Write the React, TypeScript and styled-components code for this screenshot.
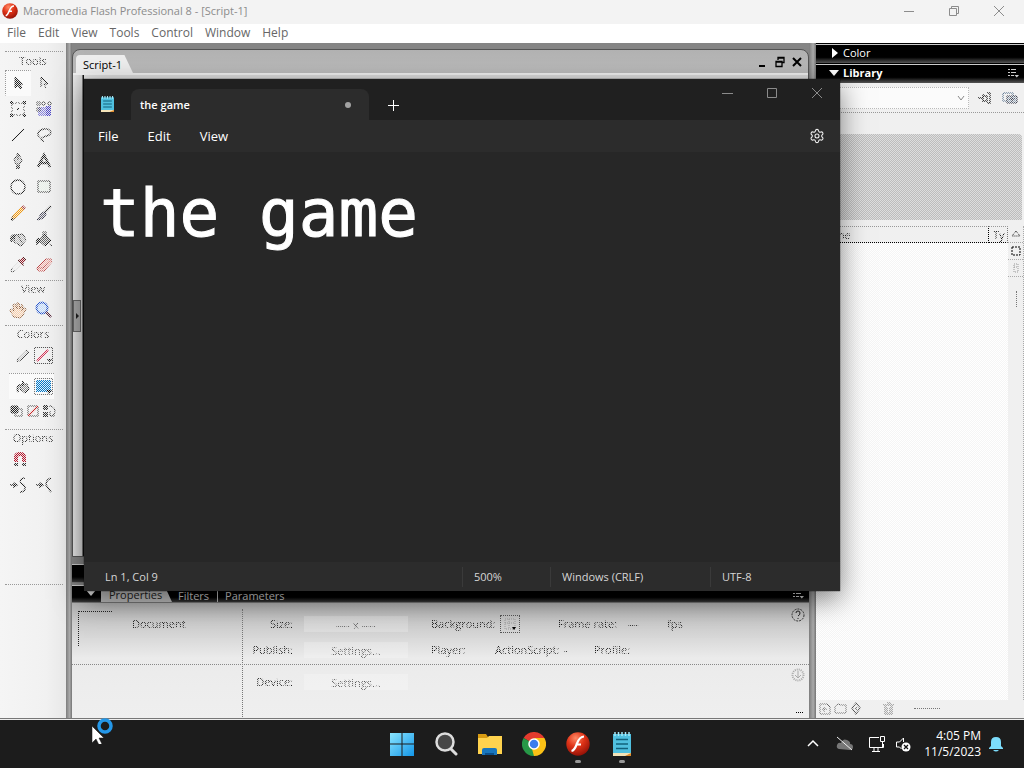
import React from "react";
import styled, { createGlobalStyle, css } from "styled-components";
import { Settings } from "lucide-react";

const GlobalStyle = createGlobalStyle`
  *, *::before, *::after { box-sizing: border-box; }
  html, body { margin: 0; padding: 0; }
  body { font-family: "Open Sans", "Noto Sans", sans-serif; font-size: 12px; background: #1c1c1c; overflow: hidden; }
  button, input, select, textarea { font: inherit; color: inherit; margin: 0; }
  button { border: 0; padding: 0; background: none; display: inline-flex; align-items: center; justify-content: center; }
  svg { display: block; flex: none; }
`;

/* Disabled parts are drawn through a one-pixel checkerboard. */
const dither = css`
  mask-image: repeating-conic-gradient(#000 0 25%, rgba(0, 0, 0, 0.08) 0 50%);
  mask-size: 2px 2px;
`;

const Desktop = styled.div`
  position: relative;
  display: flex;
  flex-direction: column;
  min-height: 100vh;
`;

/* ---------- Flash application frame ---------- */

const TitleBar = styled.header`
  display: flex;
  align-items: center;
  height: 24px;
  padding: 0 17px 2px 2px;
  gap: 5px;
  background: #f3f3f3;
  color: #8c8c8c;
`;
const AppTitle = styled.h1`
  margin: 0;
  flex: 1;
  font-size: 11px;
  line-height: 22px;
  font-weight: 400;
`;
const WindowControls = styled.div`
  display: flex;
  gap: 29px;
`;
const MenuBar = styled.nav`
  display: flex;
  align-items: center;
  height: 19px;
  padding: 0 0 2px 7px;
  gap: 12px;
  background: #fff;
  color: #666;
`;
const MenuItem = styled.button`
  font-size: 12px;
  line-height: 17px;
`;

const Workspace = styled.main`
  flex: 1;
  display: grid;
  grid-template-columns: 66px 6px minmax(0, 1fr) 7px 208px;
  background: #858585;
  border-bottom: 1px solid #777;
`;
const Splitter = styled.div`
  background: linear-gradient(90deg, #7d7d7d, #aaa 60%, #747474);
`;

/* ---------- Tools ---------- */

const Tools = styled.aside`
  background: linear-gradient(90deg, #f5f5f5, #f1f1f1 70%, #e8e8e8);
  padding: 8px 3px 0 5px;
`;
const ToolSection = styled.section<{ $last?: boolean }>`
  border-top: 1px dotted #999;
  padding-bottom: ${(p) => (p.$last ? 86 : 1)}px;
  border-bottom: ${(p) => (p.$last ? "1px dotted #999" : "0")};
  margin-bottom: 1px;
`;
const ToolHeading = styled.h2<{ $first?: boolean }>`
  margin: 0;
  padding: 0 2px 0 0;
  text-align: center;
  font-size: 11px;
  font-weight: 400;
  line-height: ${(p) => (p.$first ? 18 : 16)}px;
  color: #222;
  ${dither}
`;
const ToolGrid = styled.div`
  display: grid;
  grid-template-columns: 26px 26px;
`;
const ToolButton = styled.button<{ $active?: boolean }>`
  height: 26px;
  border: 1px dotted transparent;
  ${(p) => p.$active && css`border-color: #999 transparent transparent #999; background: #fafafa;`}
  & svg { ${dither} }
`;
const SwatchRow = styled.div<{ $active?: boolean }>`
  display: flex;
  align-items: center;
  justify-content: flex-end;
  gap: 4px;
  margin: 0 9px 5px 4px;
  height: 26px;
  border-top: 1px dotted ${(p) => (p.$active ? "#999" : "transparent")};
  background: ${(p) => (p.$active ? "#fafafa" : "transparent")};
  & svg { ${dither} }
`;
const SwatchOptions = styled.div`
  display: flex;
  gap: 2px;
  padding: 0 0 9px 5px;
  & svg { ${dither} }
`;

/* ---------- Centre: script document and properties ---------- */

const Centre = styled.div`
  display: flex;
  flex-direction: column;
  gap: 7px;
  padding-top: 6px;
`;
const ScriptWindow = styled.section`
  flex: 1;
  display: flex;
  flex-direction: column;
  border: 1px solid #555;
  border-radius: 8px 8px 0 0;
  background: linear-gradient(180deg, #b2b2b2, #bcbcbc 23px, #dcdcdc 24px, #d8d8d8);
`;
const ScriptTabs = styled.div`
  display: flex;
  align-items: flex-end;
  justify-content: space-between;
  height: 23px;
  padding: 0 4px 0 3px;
`;
const ScriptTab = styled.button`
  height: 18px;
  width: 57px;
  justify-content: flex-start;
  padding-left: 7px;
  background: #eee;
  border-radius: 4px 0 0 0;
  clip-path: polygon(0 0, 85% 0, 100% 100%, 0 100%);
  font-size: 11px;
  color: #000;
`;
const ScriptControls = styled.div`
  display: flex;
  gap: 3px;
  padding-bottom: 4px;
`;
const ScriptBody = styled.div`
  flex: 1;
  display: flex;
  align-items: center;
  background: linear-gradient(90deg, #e6e6e6, #d6d6d6 9px, #111 10px, #111 11px, #ddd 11px);
  border-top: 2px solid #f1f1f1;
`;
const Collapser = styled.button`
  width: 8px;
  height: 32px;
  border: 1px solid #666;
  background: #aaa;
`;
const PanelStack = styled.div`
  display: flex;
  flex-direction: column;
  gap: 2px;
`;
const PanelBar = styled.div<{ $height: number }>`
  display: flex;
  align-items: flex-end;
  height: ${(p) => p.$height}px;
  padding: 0 5px 0 14px;
  border-top: 1px solid #ccc;
  border-bottom: 1px solid #777;
  background: linear-gradient(180deg, #000 70%, #3c3c3c);
  color: #ccc;
`;
const PropertiesTab = styled.button`
  width: 71px;
  height: 14px;
  margin-left: 5px;
  padding-left: 8px;
  justify-content: flex-start;
  background: #bfbfbf;
  color: #222;
  font-size: 11px;
  line-height: 14px;
  clip-path: polygon(0 0, 91% 0, 100% 100%, 0 100%);
`;
const PanelTab = styled.button`
  margin-left: 6px;
  padding-right: 8px;
  font-size: 11px;
  line-height: 13px;
  & + & { border-left: 1px solid #bbb; margin-left: 0; padding-left: 7px; }
`;
const BarMenu = styled.button`
  margin-left: auto;
  align-self: center;
`;
const PropertiesPanel = styled.section`
  display: grid;
  grid-template-columns: 171px minmax(0, 1fr) 22px;
  height: 115px;
  background: linear-gradient(180deg, #b2b2b2, #cbcbcb 20px, #ebebeb 55px, #efefef);
  color: #111;
`;
const DocumentCell = styled.div`
  display: flex;
  align-items: flex-start;
  gap: 20px;
  margin-top: 6px;
  border-right: 1px dotted #777;
  padding: 2px 0 0 6px;
  height: 108px;
`;
const PreviewBox = styled.div`
  width: 34px;
  height: 35px;
  border-top: 1px dotted #222;
  border-left: 1px dotted #222;
`;
const Label = styled.span<{ $width?: number }>`
  width: ${(p) => (p.$width ? `${p.$width}px` : "auto")};
  font-size: 11px;
  line-height: 16px;
  white-space: nowrap;
  ${dither}
`;
const DocumentType = styled(Label)`
  padding-top: 5px;
`;
const Fields = styled.div`
  display: flex;
  flex-direction: column;
`;
const FieldBlock = styled.div<{ $first?: boolean }>`
  display: flex;
  flex-direction: column;
  gap: 6px;
  height: ${(p) => (p.$first ? 62 : 51)}px;
  padding: ${(p) => (p.$first ? "11px 0 0 179px" : "7px 0 0 8px")};
  margin: ${(p) => (p.$first ? "0 -22px 0 -171px" : "0")};
  border-bottom: ${(p) => (p.$first ? "1px dotted #888" : "0")};
`;
const FieldRow = styled.div`
  display: flex;
  align-items: center;
  height: 20px;
`;
const FieldName = styled.label<{ $width: number; $right?: boolean }>`
  width: ${(p) => p.$width}px;
  text-align: ${(p) => (p.$right ? "right" : "left")};
  font-size: 11px;
  line-height: 16px;
  white-space: nowrap;
  ${dither}
`;
const FieldButton = styled.button`
  width: 104px;
  height: 16px;
  margin: 0 23px 0 11px;
  background: rgba(255, 255, 255, 0.22);
  color: #555;
  font-size: 11px;
  & span { ${dither} }
`;
const ColorWell = styled.button`
  width: 20px;
  height: 18px;
  margin-right: 38px;
  border: 1px dotted #555;
`;
const PanelActions = styled.div`
  display: flex;
  flex-direction: column;
  align-items: center;
  padding: 5px 0 2px;
`;
const ActionSlot = styled.button`
  height: 14px;
  & + & { margin-top: 46px; }
  & + & + & { margin-top: 22px; }
`;

/* ---------- Library ---------- */

const Library = styled.aside`
  display: flex;
  flex-direction: column;
  background: #f0f0f0;
  min-width: 0;
`;
const LibraryHeader = styled.button<{ $open?: boolean }>`
  display: flex;
  justify-content: flex-start;
  gap: 4px;
  height: 20px;
  padding: 0 5px 2px 13px;
  border-top: 1px solid #000;
  box-shadow: inset 0 1px #ccc;
  background: linear-gradient(180deg, #000 70%, #555);
  color: #fff;
  font-size: 11px;
  font-weight: ${(p) => (p.$open ? 700 : 400)};
  & > :nth-child(3) { margin-left: auto; }
`;
const LibraryPicker = styled.div`
  display: flex;
  align-items: center;
  gap: 7px;
  height: 30px;
  padding: 0 5px 0 8px;
  border-bottom: 1px dotted #999;
`;
const SelectFrame = styled.div`
  flex: 1;
  display: grid;
  align-items: center;
  justify-items: end;
  & > * { grid-area: 1 / 1; }
  & > svg { margin-right: 4px; pointer-events: none; }
`;
const DocumentSelect = styled.select`
  appearance: none;
  width: 100%;
  height: 22px;
  border: 1px dotted #bbb;
  border-radius: 0;
  background: #fbfbfb;
`;
const LibraryTool = styled.button`
  width: 18px;
  & svg { ${dither} }
`;
const PreviewArea = styled.div`
  height: 86px;
  margin: 21px 2px 6px 0;
  border-radius: 0 4px 0 0;
  background: repeating-conic-gradient(#bdbdbd 0 25%, #dedede 0 50%) 0 0 / 2px 2px;
`;
const LibraryList = styled.div`
  flex: 1;
  display: grid;
  grid-template-columns: minmax(0, 1fr) 16px;
`;
const ListSurface = styled.div`
  background: repeating-conic-gradient(#f5f5f5 0 25%, #fff 0 50%) 0 0 / 2px 2px;
`;
const LibraryTable = styled.table`
  width: 100%;
  table-layout: fixed;
  border-collapse: separate;
  border-spacing: 0;
  background: #f0f0f0;
`;
const HeadCell = styled.th<{ $width?: number }>`
  width: ${(p) => (p.$width ? `${p.$width}px` : "auto")};
  height: 17px;
  padding: 0 0 0 4px;
  border-top: 1px dotted #999;
  border-bottom: 1px dotted #000;
  border-right: 1px dotted ${(p) => (p.$width ? "#777" : "#000")};
  text-align: left;
  font-size: 11px;
  line-height: 15px;
  font-weight: 400;
  white-space: nowrap;
  & span { ${dither} }
`;
const ListButtons = styled.div`
  display: flex;
  flex-direction: column;
  border-right: 1px dotted #aaa;
`;
const ListButton = styled.button`
  height: 17px;
  border-bottom: 1px dotted #aaa;
`;
const ScrollMark = styled.span`
  height: 16px;
  margin: 14px 6px 0 8px;
  border-left: 1px dotted #777;
`;
const LibraryFooter = styled.footer`
  display: flex;
  align-items: center;
  gap: 19px;
  height: 18px;
  padding: 0 0 2px 2px;
  & svg { ${dither} }
`;
const FooterGroup = styled.div`
  display: flex;
  gap: 3px;
`;
const FooterRule = styled.span`
  width: 26px;
  border-top: 1px dotted #777;
`;

/* ---------- Notepad ---------- */

const Notepad = styled.section`
  position: absolute;
  left: 84px;
  top: 79px;
  right: 184px;
  bottom: 177px;
  display: flex;
  flex-direction: column;
  background: #272727;
  color: #fff;
  box-shadow: 0 0 1px #000, 0 8px 26px rgba(0, 0, 0, 0.5);
`;
const NoteTitle = styled.header`
  display: flex;
  align-items: flex-end;
  height: 41px;
  padding: 0 17px;
  background: #202020;
`;
const NoteLogo = styled.span`
  align-self: center;
  margin-top: 8px;
`;
const NoteTab = styled.div`
  display: flex;
  align-items: center;
  justify-content: space-between;
  width: 238px;
  height: 31px;
  margin: 0 16px 0 17px;
  padding: 0 18px 0 9px;
  border-radius: 8px 8px 0 0;
  background: #2c2c2c;
  font-size: 11px;
  font-weight: 600;
`;
const UnsavedDot = styled.i`
  width: 6px;
  height: 6px;
  border-radius: 50%;
  background: #a2a2a2;
`;
const NewTab = styled.button`
  width: 16px;
  height: 31px;
`;
const NoteControls = styled.div`
  display: flex;
  gap: 33px;
  margin-left: auto;
  align-self: flex-start;
  padding-top: 8px;
  color: #8b8b8b;
`;
const NoteMenu = styled.nav`
  display: flex;
  align-items: center;
  height: 32px;
  padding: 0 15px 0 14px;
  gap: 29px;
  background: #2c2c2c;
  font-size: 13px;
  & > :last-child { margin-left: auto; }
`;
const Editor = styled.textarea`
  flex: 1;
  width: 100%;
  padding: 22px 16px;
  border: 0;
  outline: 0;
  resize: none;
  background: transparent;
  font-family: "DejaVu Sans Mono", monospace;
  font-size: 66px;
  line-height: 80px;
  -webkit-text-stroke: 1px #fff;
`;
const StatusBar = styled.footer`
  display: grid;
  grid-template-columns: minmax(0, 1fr) 88px 160px 130px;
  align-items: center;
  height: 29px;
  background: #2c2c2c;
  color: #d6d6d6;
  font-size: 11px;
`;
const StatusItem = styled.span<{ $first?: boolean }>`
  line-height: 20px;
  padding-left: ${(p) => (p.$first ? 21 : 11)}px;
  border-left: ${(p) => (p.$first ? "0" : "1px solid #3a3a3a")};
`;

/* ---------- Taskbar ---------- */

const Taskbar = styled.footer`
  display: grid;
  grid-template-columns: 1fr auto 1fr;
  align-items: center;
  height: 49px;
  border-top: 1px solid #eee;
  background: #1c1c1c;
  color: #fff;
`;
const Pinned = styled.nav`
  grid-column: 2;
  display: flex;
  gap: 20px;
`;
const PinnedApp = styled.button<{ $running?: boolean }>`
  width: 24px;
  height: 48px;
  position: relative;
  &::after {
    content: "";
    display: ${(p) => (p.$running ? "block" : "none")};
    position: absolute;
    bottom: 5px;
    left: 9px;
    width: 6px;
    height: 3px;
    border-radius: 2px;
    background: #999;
  }
`;
const Tray = styled.div`
  display: flex;
  align-items: center;
  justify-content: flex-end;
  padding-right: 21px;
`;
const TrayButton = styled.button<{ $width: number }>`
  width: ${(p) => p.$width}px;
  height: 32px;
`;
const Clock = styled.time`
  text-align: right;
  font-size: 12px;
  line-height: 16px;
  margin: 0 8px 0 11px;
  white-space: nowrap;
`;
const Pointer = styled.div`
  position: absolute;
  left: 91px;
  bottom: 24px;
  pointer-events: none;
`;

/* ---------- Drawings ---------- */

type IconProps = { size?: number; w?: number; h?: number; children: React.ReactNode };
const Icon = ({ size = 18, w = size, h = size, children }: IconProps) => (
  <svg width={w} height={h} viewBox={`0 0 ${w} ${h}`} fill="none" stroke="currentColor" aria-hidden="true">
    {children}
  </svg>
);

const FlashLogo = ({ size }: { size: number }) => (
  <svg width={size} height={size} viewBox="0 0 24 24" aria-hidden="true">
    <defs>
      <radialGradient id={`flash${size}`} cx="40%" cy="25%" r="80%">
        <stop offset="0" stopColor="#ff8a66" />
        <stop offset=".45" stopColor="#e03418" />
        <stop offset="1" stopColor="#8e0e05" />
      </radialGradient>
    </defs>
    <circle cx="12" cy="12" r="11.7" fill={`url(#flash${size})`} />
    <path d="M18 4.500c-4 0-5.500 3-7 7s-2.500 7-5.500 7.500M9.500 12.500h5.500" fill="none" stroke="#fff" strokeWidth="2.200" />
  </svg>
);

const NotepadLogo = ({ w, h }: { w: number; h: number }) => (
  <svg width={w} height={h} viewBox="0 0 18 24" preserveAspectRatio="none" aria-hidden="true">
    <path d="M0 2h18v20H0z" fill="#50c0df" />
    <path d="M0 21h18v3H0z" fill="#f3e3b8" />
    <path d="M12 24l6-3v3z" fill="#e08b2c" />
    <path d="M2 0v4M5.500 0v4M9 0v4M12.500 0v4M16 0v4" stroke="#a5e7f7" strokeWidth="1.500" />
    <path d="M3 7.500h12M3 12h12M3 16.500h12" stroke="#11617c" strokeWidth="1.600" />
  </svg>
);

const PanelMenuIcon = () => (
  <Icon w={12} h={10}>
    <path d="M1 1.500h2M4 1.500h5M1 4.500h2M4 4.500h5M1 7.500h2M4 7.500h3" stroke="#ccc" />
    <path d="M7.500 7h4.500l-2.200 2.500z" fill="#ccc" stroke="none" />
  </Icon>
);

const toolIcons: { name: string; art: React.ReactNode }[] = [
  { name: "Selection", art: <path d="M6 3v11l3-3 2 4 2-1-2-4h3z" fill="#222" stroke="#222" /> },
  { name: "Subselection", art: <path d="M6 3v10l3-3 2 4M6 3l7 7H9" stroke="#222" fill="#ddd" /> },
  {
    name: "Free Transform",
    art: <><path d="M3 3h12v12H3z" stroke="#222" strokeDasharray="2 1" /><path d="M1 1h3v3H1zM14 1h3v3h-3zM1 14h3v3H1zM14 14h3v3h-3zM8 8h2v2H8z" fill="#222" stroke="none" /></>,
  },
  {
    name: "Gradient Transform",
    art: <><path d="M3 7h12v9H3z" fill="#8a86dc" stroke="none" /><path d="M11 6h5v10h-5z" fill="#4f48c8" stroke="none" /><path d="M2 2h3v3H2zM7 2h3v3H7zM13 2h3v3h-3zM2 8h3v3H2z" stroke="#333" /></>,
  },
  { name: "Line", art: <path d="M3 15L15 3" stroke="#222" strokeWidth="1.500" /> },
  { name: "Lasso", art: <path d="M5 11c-4-2-2-7 4-8s9 4 5 6-8 2-8 4 3 0 2 3" stroke="#333" strokeWidth="1.400" /> },
  { name: "Pen", art: <><path d="M9 1l4 7-2 4H7L5 8z" stroke="#222" fill="#bbb" /><path d="M7 13h4v4H7z" fill="#444" stroke="none" /><path d="M9 2v6" stroke="#222" /></> },
  { name: "Type", art: <path d="M3 15L9 3l6 12M5.500 11h7" stroke="#222" strokeWidth="2.600" /> },
  { name: "Oval", art: <circle cx="9" cy="9" r="7" stroke="#222" strokeWidth="1.400" fill="#f6f6f6" /> },
  { name: "Rectangle", art: <path d="M3 3h12v11H3z" stroke="#222" fill="#e9f2ea" /> },
  { name: "Pencil", art: <><path d="M2 16l2-5 9-9 3 3-9 9z" fill="#f59a0c" stroke="#8a632a" /><path d="M12 3l2-2 3 3-2 2z" fill="#a44" stroke="none" /><path d="M2 16l2-1" stroke="#000" strokeWidth="2" /></> },
  { name: "Brush", art: <><path d="M16 2l-7 7" stroke="#333" strokeWidth="2" /><path d="M9 8l2 2c-1 4-4 5-9 6 3-3 3-7 7-8z" fill="#667" stroke="#334" /></> },
  { name: "Ink Bottle", art: <><path d="M6 5l8-1 3 6-5 6-7-4z" fill="#bbb" stroke="#222" /><path d="M6 5c-4-1-5 3-4 7l3-4z" fill="#333" stroke="#222" /><path d="M9 5l4 8" stroke="#333" /></> },
  { name: "Paint Bucket", art: <><path d="M9 4l7 6-6 6-7-6z" fill="#666" stroke="#111" /><path d="M8 8V2h3v5" stroke="#222" /><path d="M4 8c-3 0-3 4-2 7l3-4zM14 14l3 2" fill="#222" stroke="#222" /></> },
  { name: "Eyedropper", art: <><path d="M2 16l1-4 7-7 3 3-7 7z" fill="#eee" stroke="#444" /><path d="M9 4l2 0 3-3 3 3-3 3v3z" fill="#951c28" stroke="#522" /></> },
  { name: "Eraser", art: <><path d="M2 12l9-9h5l1 3-8 9H3z" fill="#f4b2aa" stroke="#b44" /><path d="M2 12h6l8-9" stroke="#b44" /></> },
];

const Close = ({ size = 12 }: { size?: number }) => (
  <Icon size={size}><path d={`M1 1L${size - 1} ${size - 1}M${size - 1} 1L1 ${size - 1}`} /></Icon>
);

export default function App() {
  return (
    <Desktop>
      <GlobalStyle />
      <TitleBar>
        <FlashLogo size={16} />
        <AppTitle>Macromedia Flash Professional 8 - [Script-1]</AppTitle>
        <WindowControls>
          <button aria-label="Minimize"><Icon w={16} h={12}><path d="M3 6.500h10" /></Icon></button>
          <button aria-label="Restore"><Icon w={16} h={12}><path d="M3.500 3.500h7v7h-7zM5.500 3.500V1.500h7v7h-2" strokeLinejoin="round" /></Icon></button>
          <button aria-label="Close"><Icon w={16} h={12}><path d="M3 1l10 10M13 1L3 11" /></Icon></button>
        </WindowControls>
      </TitleBar>
      <MenuBar>
        {["File", "Edit", "View", "Tools", "Control", "Window", "Help"].map((m) => <MenuItem key={m}>{m}</MenuItem>)}
      </MenuBar>

      <Workspace>
        <Tools>
          <ToolSection>
            <ToolHeading $first>Tools</ToolHeading>
            <ToolGrid>
              {toolIcons.map((t, i) => (
                <ToolButton key={t.name} aria-label={t.name} $active={i === 0}><Icon>{t.art}</Icon></ToolButton>
              ))}
            </ToolGrid>
          </ToolSection>
          <ToolSection>
            <ToolHeading>View</ToolHeading>
            <ToolGrid>
              <ToolButton aria-label="Hand">
                <Icon><path d="M5 16l-4-6 1-2 3 2-1-6 2-1 2 5 0-6h2l1 6 2-5 1 1-1 6 2-3 2 1-3 6-2 3z" fill="#f9cda8" stroke="#8a5630" /></Icon>
              </ToolButton>
              <ToolButton aria-label="Zoom">
                <Icon><circle cx="7" cy="7" r="5.500" fill="#c0dcff" stroke="#2456d0" strokeWidth="2" /><path d="M11 11l5 5" stroke="#5b2c40" strokeWidth="3" /></Icon>
              </ToolButton>
            </ToolGrid>
          </ToolSection>
          <ToolSection>
            <ToolHeading>Colors</ToolHeading>
            <SwatchRow>
              <Icon size={14}><path d="M1 13l1-4 8-8 3 2-8 8z" stroke="#444" fill="#ccc" /></Icon>
              <Icon w={20} h={18}><path d="M.5.5h18v16H.5z" stroke="#555" /><path d="M3 14L14 3" stroke="#d0143c" strokeWidth="2" /><path d="M13 12h5l-2.500 3z" fill="#000" stroke="none" /></Icon>
            </SwatchRow>
            <SwatchRow $active>
              <Icon size={14}><path d="M5 4l6 0 2 5-4 4-5-4z" fill="#888" stroke="#222" /><path d="M7 1v5M4 5C1 6 1 8 2 12" stroke="#222" strokeWidth="2" /></Icon>
              <Icon w={20} h={18}><path d="M2 2h15v12H2z" fill="#0078c8" stroke="none" /><path d="M.5.5h18v16H.5z" stroke="#777" /><path d="M12 12h6l-3 4z" fill="#000" stroke="none" /></Icon>
            </SwatchRow>
            <SwatchOptions>
              <Icon size={14}><path d="M5 5h7v7H5z" fill="#eee" stroke="#333" /><path d="M1 2h7v7H1z" fill="#222" stroke="#222" /></Icon>
              <Icon size={14}><path d="M2 2h10v10H2z" stroke="#333" /><path d="M2 12L12 2" stroke="#c22" strokeWidth="2" /></Icon>
              <Icon size={14}><path d="M1 1h5v5H1zM1 8h5v5H1z" fill="#333" stroke="none" /><path d="M7 2h2q4 1 4 5t-5 5M8 7v5h5" stroke="#333" /></Icon>
            </SwatchOptions>
          </ToolSection>
          <ToolSection $last>
            <ToolHeading>Options</ToolHeading>
            <ToolGrid>
              <ToolButton aria-label="Snap to Objects"><Icon><path d="M7 12V7q0-3 4-3t4 3v5" stroke="#b5142a" strokeWidth="4" /><path d="M5 14.500h4M13 14.500h4" stroke="#333" strokeWidth="3" /></Icon></ToolButton>
              <span />
              <ToolButton aria-label="Smooth"><Icon><path d="M1 9h7M5 7l3 2-3 2zM16 2c-4 0-6 3-4 5s5 3 4 6-3 3-5 3" stroke="#222" strokeWidth="1.400" /></Icon></ToolButton>
              <ToolButton aria-label="Straighten"><Icon><path d="M1 9h7M5 7l3 2-3 2zM16 2c-3 1-5 4-5 7l5 7" stroke="#222" strokeWidth="1.400" /></Icon></ToolButton>
            </ToolGrid>
          </ToolSection>
        </Tools>

        <Splitter />

        <Centre>
          <ScriptWindow>
            <ScriptTabs>
              <ScriptTab>Script-1</ScriptTab>
              <ScriptControls>
                <button aria-label="Minimize script"><Icon size={14}><path d="M3 11h6" stroke="#000" strokeWidth="2" /></Icon></button>
                <button aria-label="Restore script"><Icon size={14}><path d="M3 6.500h6v5H3zM3 7h6M5 5V2.500h6v5H9M5 3h6" stroke="#000" strokeWidth="1.300" /></Icon></button>
                <button aria-label="Close script"><Icon size={14}><path d="M3 3l8 8M11 3l-8 8" stroke="#000" strokeWidth="2" /></Icon></button>
              </ScriptControls>
            </ScriptTabs>
            <ScriptBody>
              <Collapser aria-label="Expand side pane"><Icon w={5} h={8}><path d="M1 1v6l3-3z" fill="#222" stroke="none" /></Icon></Collapser>
            </ScriptBody>
          </ScriptWindow>
          <PanelStack>
            <PanelBar $height={19} />
            <div>
              <PanelBar $height={18}>
                <Icon w={10} h={14}><path d="M0 2h10L5 8z" fill="#ddd" stroke="none" /></Icon>
                <PropertiesTab>Properties</PropertiesTab>
                <PanelTab>Filters</PanelTab>
                <PanelTab>Parameters</PanelTab>
                <BarMenu aria-label="Panel options"><PanelMenuIcon /></BarMenu>
              </PanelBar>
              <PropertiesPanel>
                <DocumentCell>
                  <PreviewBox />
                  <DocumentType>Document</DocumentType>
                </DocumentCell>
                <Fields>
                  <FieldBlock $first>
                    <FieldRow>
                      <FieldName htmlFor="size" $width={42} $right>Size:</FieldName>
                      <FieldButton id="size"><span>---- x ----</span></FieldButton>
                      <FieldName htmlFor="background" $width={69}>Background:</FieldName>
                      <ColorWell id="background"><Icon size={14}><path d="M2 2h10v10H2zM6 2v10M2 6h10" stroke="#999" strokeDasharray="1 1" /><path d="M9 10h4l-2 3z" fill="#000" stroke="none" /></Icon></ColorWell>
                      <Label $width={70}>Frame rate:</Label>
                      <Label $width={39}>---</Label>
                      <Label>fps</Label>
                    </FieldRow>
                    <FieldRow>
                      <FieldName htmlFor="publish" $width={42} $right>Publish:</FieldName>
                      <FieldButton id="publish"><span>Settings...</span></FieldButton>
                      <Label $width={64}>Player:</Label>
                      <Label $width={69}>ActionScript:</Label>
                      <Label $width={30}>-</Label>
                      <Label>Profile:</Label>
                    </FieldRow>
                  </FieldBlock>
                  <FieldBlock>
                    <FieldRow>
                      <FieldName htmlFor="device" $width={42} $right>Device:</FieldName>
                      <FieldButton id="device"><span>Settings...</span></FieldButton>
                    </FieldRow>
                  </FieldBlock>
                </Fields>
                <PanelActions>
                  <ActionSlot aria-label="Help"><Icon size={14}><circle cx="7" cy="7" r="6" stroke="#333" strokeDasharray="2 1" /><path d="M5 5q0-2 2-2t2 2-2 3M7 10v1" stroke="#222" /></Icon></ActionSlot>
                  <ActionSlot aria-label="Edit action"><Icon size={14}><circle cx="7" cy="7" r="5.500" stroke="#aaa" strokeWidth="2" strokeDasharray="1 1" /><path d="M7 3v7M4 7l3 3 3-3" stroke="#aaa" /></Icon></ActionSlot>
                  <ActionSlot aria-label="Expand"><Icon w={12} h={14}><path d="M4 8.500h8" stroke="#000" strokeDasharray="1 1" /></Icon></ActionSlot>
                </PanelActions>
              </PropertiesPanel>
            </div>
          </PanelStack>
        </Centre>

        <Splitter />

        <Library>
          <LibraryHeader><Icon w={10} h={10}><path d="M3 0v10l6-5z" fill="#fff" stroke="none" /></Icon><span>Color</span></LibraryHeader>
          <LibraryHeader $open>
            <Icon w={10} h={10}><path d="M0 2h10L5 8z" fill="#fff" stroke="none" /></Icon>
            <span>Library</span>
            <PanelMenuIcon />
          </LibraryHeader>
          <LibraryPicker>
            <SelectFrame>
              <DocumentSelect aria-label="Library document" />
              <Icon w={8} h={6}><path d="M1 1l3 4 3-4" stroke="#888" /></Icon>
            </SelectFrame>
            <LibraryTool aria-label="Pin library"><Icon w={16} h={14}><path d="M1 7h5M6 3v8M6 5h4v5H6M10 2h3v10h-3" stroke="#222" strokeWidth="1.400" /></Icon></LibraryTool>
            <LibraryTool aria-label="New library panel"><Icon w={16} h={14}><path d="M1 2h10v8H1z" stroke="#357" /><path d="M5 5h10v7H5z" fill="#9ab" stroke="#223" /><path d="M7 8h6M10 6v5" stroke="#223" /></Icon></LibraryTool>
          </LibraryPicker>
          <PreviewArea />
          <LibraryList>
            <ListSurface>
              <LibraryTable>
                <thead><tr><HeadCell><span>Name</span></HeadCell><HeadCell $width={19}><span>Ty</span></HeadCell></tr></thead>
              </LibraryTable>
            </ListSurface>
            <ListButtons>
              <ListButton aria-label="Sort order"><Icon w={10} h={8}><path d="M5 1L1 6h8z" stroke="#222" strokeDasharray="1 1" /></Icon></ListButton>
              <ListButton aria-label="Wide view"><Icon size={10}><path d="M1 1h8v8H1z" stroke="#000" strokeDasharray="2 1" /></Icon></ListButton>
              <ListButton aria-label="Narrow view"><Icon size={10}><path d="M3 1h4v8H3zM3 4h4" stroke="#999" strokeDasharray="1 1" /></Icon></ListButton>
              <ScrollMark />
            </ListButtons>
          </LibraryList>
          <LibraryFooter>
            <FooterGroup>
              <Icon size={13}><path d="M2 2h7l3 3v7H2zM4 7h5M6 5v5" stroke="#666" /></Icon>
              <Icon size={13}><path d="M1 4l3-2 3 1h5v8H1z" stroke="#666" /></Icon>
              <Icon size={13}><path d="M6 1l4 5-4 6-4-6zM6 5v3" stroke="#555" strokeWidth="1.400" /></Icon>
            </FooterGroup>
            <Icon size={13}><path d="M1 3h11M3 4v8h7V4M5 1h4M5 5v6M8 5v6" stroke="#666" /></Icon>
            <FooterRule />
          </LibraryFooter>
        </Library>
      </Workspace>

      <Taskbar>
        <Pinned>
          <PinnedApp aria-label="Start"><Icon size={24}>
            <defs><linearGradient id="win" x1="0" y1="0" x2="1" y2="1"><stop offset="0" stopColor="#8be6ff" /><stop offset="1" stopColor="#1396e8" /></linearGradient></defs>
            <path d="M0 1h11.500v10.500H0zM12.500 1H24v10.500H12.500zM0 12.500h11.500V24H0zM12.500 12.500H24V24H12.500z" fill="url(#win)" stroke="none" />
          </Icon></PinnedApp>
          <PinnedApp aria-label="Search"><Icon size={24}><circle cx="11" cy="10" r="8.500" fill="#474747" stroke="#ddd" strokeWidth="2.500" /><path d="M17 17l5 5" stroke="#ddd" strokeWidth="3" strokeLinecap="round" /></Icon></PinnedApp>
          <PinnedApp aria-label="File Explorer"><Icon size={24}><path d="M0 2h8l2 3h14v17H0z" fill="#d89b12" stroke="none" /><path d="M0 6h9l2-2h13v18H0z" fill="#ffd34e" stroke="none" /><path d="M4 23v-5q0-2 2-2h11q2 0 2 2v5z" fill="#1976bd" stroke="none" /><path d="M7 23v-2h9v2z" fill="#0b4f8b" stroke="none" /></Icon></PinnedApp>
          <PinnedApp aria-label="Chrome"><Icon size={24}>
            <path d="M12 12L1.600 6A12 12 0 0 1 22.400 6H12z" fill="#e33b2e" stroke="none" />
            <path d="M12 12L22.400 6A12 12 0 0 1 12 24z" fill="#fbc116" stroke="none" />
            <path d="M12 12v12A12 12 0 0 1 1.600 6z" fill="#279847" stroke="none" />
            <path d="M12 6h10.400L17 15z" fill="#fbc116" stroke="none" />
            <path d="M17 15l-5 9-2-7z" fill="#fbc116" stroke="none" />
            <circle cx="12" cy="12" r="5" fill="#3b7ded" stroke="#fff" strokeWidth="1.500" />
          </Icon></PinnedApp>
          <PinnedApp aria-label="Flash" $running><FlashLogo size={24} /></PinnedApp>
          <PinnedApp aria-label="Notepad" $running><NotepadLogo w={18} h={24} /></PinnedApp>
        </Pinned>
        <Tray>
          <TrayButton $width={32} aria-label="Show hidden icons"><Icon w={16} h={16}><path d="M3 10l5-5 5 5" strokeWidth="1.500" /></Icon></TrayButton>
          <TrayButton $width={32} aria-label="OneDrive"><Icon w={20} h={16}><path d="M4 13q-3-1-2-4t4-2q2-5 6-3t3 4q3 0 3 3t-3 3z" fill="#777" stroke="none" /><path d="M2 1l15 13" stroke="#eee" /></Icon></TrayButton>
          <TrayButton $width={32} aria-label="Network"><Icon w={18} h={18}><path d="M11 2.500H1.500v10h14V9M4 16.500h8M6 13v3M10 13v3M12.500 1.500h4v5h-4zM14.500 7v5" /></Icon></TrayButton>
          <TrayButton $width={20} aria-label="Volume"><Icon w={16} h={16}><path d="M1.500 6h3l4-4v4M1.500 6v5h3l2 2" /><circle cx="11" cy="11" r="4.500" fill="#fff" stroke="none" /><path d="M9 9l4 4M13 9l-4 4" stroke="#111" strokeWidth="1.300" /></Icon></TrayButton>
          <Clock>4:05 PM<br />11/5/2023</Clock>
          <TrayButton $width={14} aria-label="Notifications"><Icon w={14} h={16}><path d="M0 12l2-2V6q0-5 5-5t5 5v4l2 2v1H0zM4 14h6q-3 3-6 0z" fill="#7cdcfb" stroke="none" /></Icon></TrayButton>
        </Tray>
      </Taskbar>

      <Notepad>
        <NoteTitle>
          <NoteLogo><NotepadLogo w={13} h={16} /></NoteLogo>
          <NoteTab><span>the game</span><UnsavedDot /></NoteTab>
          <NewTab aria-label="New tab"><Icon size={12}><path d="M6.500 1v11M1 6.500h11" stroke="#fff" /></Icon></NewTab>
          <NoteControls>
            <button aria-label="Minimize note"><Icon size={12}><path d="M1 6.500h11" /></Icon></button>
            <button aria-label="Maximize note"><Icon size={12}><path d="M1.500 1.500h9v9h-9z" /></Icon></button>
            <button aria-label="Close note"><Close /></button>
          </NoteControls>
        </NoteTitle>
        <NoteMenu>
          <button>File</button>
          <button>Edit</button>
          <button>View</button>
          <button aria-label="Settings"><Settings size={16} strokeWidth={1.6} color="#eee" /></button>
        </NoteMenu>
        <Editor aria-label="Text editor" defaultValue="the game" spellCheck={false} />
        <StatusBar>
          <StatusItem $first>Ln 1, Col 9</StatusItem>
          <StatusItem>500%</StatusItem>
          <StatusItem>Windows (CRLF)</StatusItem>
          <StatusItem>UTF-8</StatusItem>
        </StatusBar>
      </Notepad>

      <Pointer>
        <Icon w={24} h={28}>
          <circle cx="14" cy="10" r="6" stroke="#2497e8" strokeWidth="3.500" />
          <path d="M1 10v17l4-4 3 6 3-1-3-6h5z" fill="#fff" stroke="#111" strokeWidth=".5" />
        </Icon>
      </Pointer>
    </Desktop>
  );
}
